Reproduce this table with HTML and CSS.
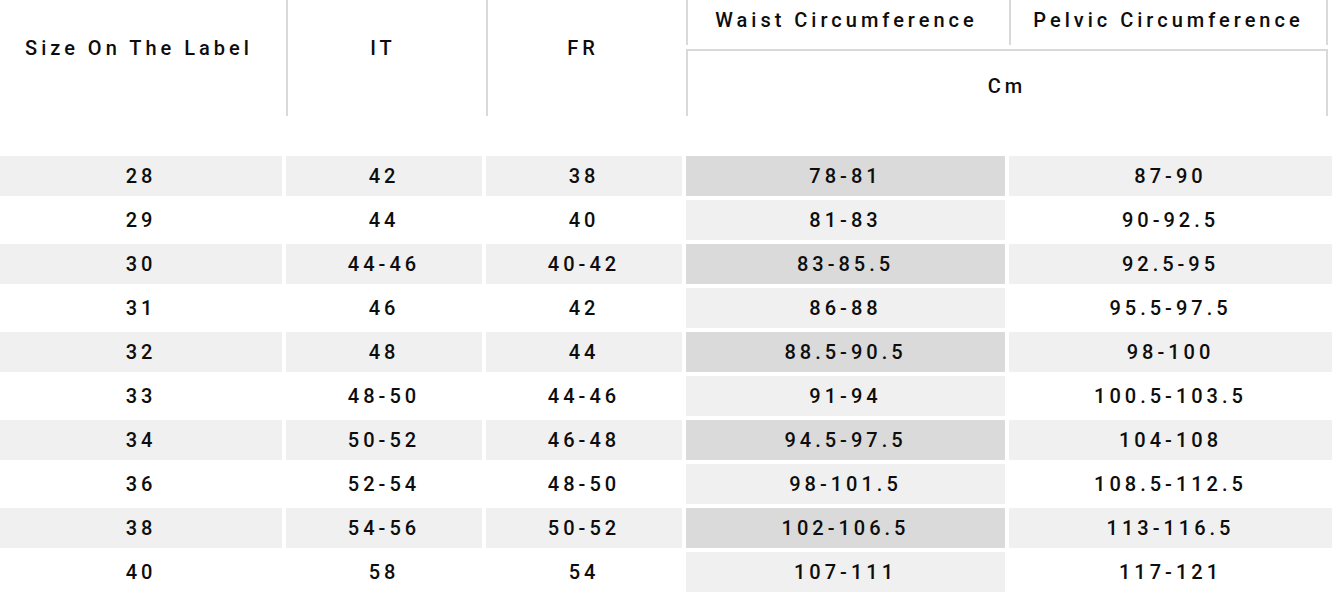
FILE: index.html
```html
<!DOCTYPE html>
<html>
<head>
<meta charset="utf-8">
<link rel="stylesheet" href="styles.css">
</head>
<body>
<div class="chart">
  <div class="head">
    <div class="hc span2">Size On The Label</div>
    <div class="hc span2 bl">IT</div>
    <div class="hc span2 bl">FR</div>
    <div class="hc top bl">Waist Circumference</div>
    <div class="hc top bl br">Pelvic Circumference</div>
    <div class="hc unit">Cm</div>
  </div>
  <div class="body">
    <div class="row odd"><div>28</div><div>42</div><div>38</div><div class="w">78-81</div><div>87-90</div></div>
    <div class="row even"><div>29</div><div>44</div><div>40</div><div class="w">81-83</div><div>90-92.5</div></div>
    <div class="row odd"><div>30</div><div>44-46</div><div>40-42</div><div class="w">83-85.5</div><div>92.5-95</div></div>
    <div class="row even"><div>31</div><div>46</div><div>42</div><div class="w">86-88</div><div>95.5-97.5</div></div>
    <div class="row odd"><div>32</div><div>48</div><div>44</div><div class="w">88.5-90.5</div><div>98-100</div></div>
    <div class="row even"><div>33</div><div>48-50</div><div>44-46</div><div class="w">91-94</div><div>100.5-103.5</div></div>
    <div class="row odd"><div>34</div><div>50-52</div><div>46-48</div><div class="w">94.5-97.5</div><div>104-108</div></div>
    <div class="row even"><div>36</div><div>52-54</div><div>48-50</div><div class="w">98-101.5</div><div>108.5-112.5</div></div>
    <div class="row odd"><div>38</div><div>54-56</div><div>50-52</div><div class="w">102-106.5</div><div>113-116.5</div></div>
    <div class="row even"><div>40</div><div>58</div><div>54</div><div class="w">107-111</div><div>117-121</div></div>
  </div>
</div>
</body>
</html>
```

FILE: styles.css
```css
html, body {
  margin: 0;
  padding: 0;
  background: #fff;
}
body {
  font-family: Roboto, "Liberation Sans", sans-serif;
  font-size: 20px;
  font-weight: 500;
  letter-spacing: 4px;
  color: #0d0d0d;
}
.chart {
  width: 1332px;
}
.head {
  display: grid;
  grid-template-columns: 282px 196px 196px 319px 319px;
  grid-template-rows: 45px 67px;
  column-gap: 4px;
  row-gap: 4px;
}
.hc {
  display: flex;
  align-items: center;
  justify-content: center;
  box-sizing: border-box;
}
.span2 {
  grid-row: 1 / 3;
  padding-bottom: 20px;
  padding-right: 4px;
}
.top {
  padding-bottom: 6px;
}
.bl {
  border-left: 2px solid #d9d9d9;
}
.br {
  border-right: 2px solid #d9d9d9;
}
.unit {
  grid-column: 4 / 6;
  grid-row: 2;
  border-top: 2px solid #d9d9d9;
  border-left: 2px solid #d9d9d9;
  border-right: 2px solid #d9d9d9;
  padding-top: 4px;
}
.body {
  margin-top: 40px;
  display: flex;
  flex-direction: column;
  gap: 4px;
}
.row {
  display: grid;
  grid-template-columns: 282px 196px 196px 319px 323px;
  column-gap: 4px;
  height: 40px;
}
.row > div {
  display: flex;
  align-items: center;
  justify-content: center;
}
.odd > div {
  background: #f0f0f0;
}
.odd > .w {
  background: #dadada;
}
.even > div {
  background: #fff;
}
.even > .w {
  background: #f0f0f0;
}
```
